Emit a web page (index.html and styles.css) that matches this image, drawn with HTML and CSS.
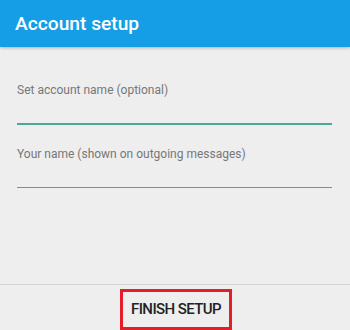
FILE: index.html
```html
<!DOCTYPE html>
<html>
<head>
<meta charset="utf-8">
<link rel="stylesheet" href="styles.css">
</head>
<body>
<div class="screen">
  <header class="appbar">Account setup</header>
  <main class="form">
    <div class="field">
      <label class="label">Set account name (optional)</label>
      <div class="input input-active"></div>
    </div>
    <div class="field field-second">
      <label class="label">Your name (shown on outgoing messages)</label>
      <div class="input"></div>
    </div>
  </main>
  <footer class="footer">
    <div class="finish"><span class="finish-text">FINISH SETUP</span></div>
  </footer>
</div>
</body>
</html>
```
FILE: styles.css
```css
html, body {
  margin: 0;
  padding: 0;
  background: #eeeeee;
}
.screen {
  width: 350px;
  height: 330px;
  display: flex;
  flex-direction: column;
  font-family: Roboto, "Liberation Sans", sans-serif;
  overflow: hidden;
}
.appbar {
  height: 47px;
  line-height: 47px;
  padding-left: 15px;
  background: #159ee6;
  color: #ffffff;
  font-size: 19.2px;
  font-weight: 500;
  box-shadow: 0 1px 3px rgba(0,0,0,0.25);
  position: relative;
  z-index: 1;
}
.form {
  padding: 35px 18px 0 17px;
  display: flex;
  flex-direction: column;
}
.field {
  display: flex;
  flex-direction: column;
}
.field-second {
  margin-top: 21px;
}
.label {
  font-size: 12px;
  line-height: 16px;
  color: #777777;
}
.input {
  height: 25px;
  border-bottom: 1px solid #8a8a8a;
}
.input-active {
  border-bottom: 2px solid #4aa996;
}
.footer {
  margin-top: auto;
  border-top: 1px solid #d4d4d4;
  padding-top: 4px;
  display: flex;
  justify-content: center;
}
.finish {
  width: 106px;
  height: 35px;
  border: 3px solid #e41e26;
  display: flex;
  justify-content: center;
  align-items: center;
  line-height: 35px;
  margin-left: 2px;
}
.finish-text {
  font-size: 15px;
  font-weight: 500;
  letter-spacing: -0.6px;
  color: #222222;
}
```
